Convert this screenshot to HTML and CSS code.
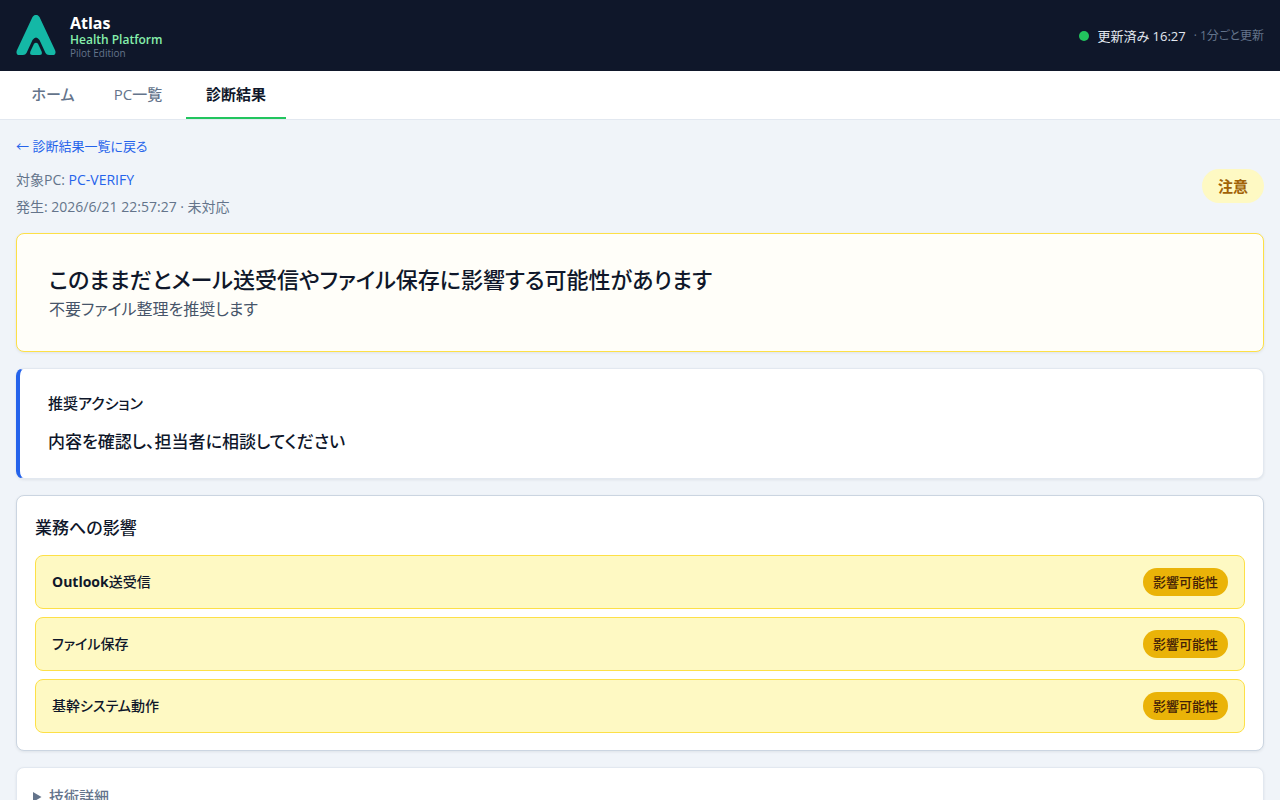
FILE: index.html
```html
<!DOCTYPE html>
<html lang="ja">
<head>
<meta charset="utf-8">
<meta name="viewport" content="width=device-width, initial-scale=1">
<title>診断結果 - Atlas Health Platform</title>
<link rel="stylesheet" href="styles.css">
</head>
<body>
<header class="topbar">
  <div class="brand">
    <svg class="brand-logo" viewBox="0 1 40 42" aria-hidden="true">
      <path fill="#14b8a6" d="M16.500 3Q20 -1.500 23.500 3L39.200 36.500Q40.500 41 36.500 41H33Q30.500 41 29.500 39L23.500 26Q20 21 16.500 26L10.500 39Q9.500 41 7 41H3.500Q-0.500 41 0.800 36.500Z"/>
      <path fill="#14b8a6" d="M18 29.800Q20 27.500 22 29.800L25.600 37.500Q26.800 41 23.500 41H16.500Q13.200 41 14.400 37.500Z"/>
    </svg>
    <div class="brand-text">
      <span class="brand-name">Atlas</span>
      <span class="brand-sub">Health Platform</span>
      <span class="brand-edition">Pilot Edition</span>
    </div>
  </div>
  <div class="status">
    <span class="status-dot"></span>
    <span class="status-time">更新済み 16:27</span>
    <span class="status-note">· 1分ごと更新</span>
  </div>
</header>
<nav class="tabs">
  <a class="tab" href="#home">ホーム</a>
  <a class="tab" href="#pcs">PC一覧</a>
  <a class="tab tab-active" href="#results" aria-current="page">診断結果</a>
</nav>
<main class="page">
  <a class="back" href="#results">← 診断結果一覧に戻る</a>
  <div class="meta">
    <div class="meta-lines">
      <p class="meta-line">対象PC: <a class="link" href="#pc-verify">PC-VERIFY</a></p>
      <p class="meta-line">発生: 2026/6/21 22:57:27 · 未対応</p>
    </div>
    <span class="level">注意</span>
  </div>
  <section class="card summary">
    <h1 class="summary-title">このままだとメール送受信やファイル保存に影響する可能性があります</h1>
    <p class="summary-text">不要ファイル整理を推奨します</p>
  </section>
  <section class="card action">
    <h2 class="action-label">推奨アクション</h2>
    <p class="action-text">内容を確認し、担当者に相談してください</p>
  </section>
  <section class="card impact">
    <h2 class="impact-title">業務への影響</h2>
    <ul class="impact-list">
      <li class="impact-row"><span><b>Outlook</b>送受信</span><span class="badge">影響可能性</span></li>
      <li class="impact-row"><span>ファイル保存</span><span class="badge">影響可能性</span></li>
      <li class="impact-row"><span>基幹システム動作</span><span class="badge">影響可能性</span></li>
    </ul>
  </section>
  <details class="card details">
    <summary class="details-title">技術詳細</summary>
  </details>
</main>
</body>
</html>
```
FILE: styles.css
```css
* { box-sizing: border-box; }

body {
  margin: 0;
  background: #f0f4f9;
  color: #0f172a;
  font-family: "Open Sans", "Noto Sans CJK JP", sans-serif;
  font-feature-settings: "palt";
  font-size: 13px;
  line-height: 20px;
}

h1, h2, p, ul { margin: 0; padding: 0; }
a { text-decoration: none; }

.topbar {
  display: flex;
  align-items: center;
  justify-content: space-between;
  padding: 13px 16px 12px;
  background: #0f172a;
}
.brand { display: flex; align-items: center; gap: 14px; }
.brand-logo { width: 40px; height: 42px; }
.brand-text { display: flex; flex-direction: column; }
.brand-name { color: #fff; font-size: 16px; font-weight: 700; line-height: 20px; }
.brand-sub { color: #86efac; font-size: 12px; font-weight: 600; line-height: 14px; }
.brand-edition { color: #64748b; font-size: 10px; line-height: 12px; }

.status { display: flex; align-items: center; gap: 8px; }
.status-dot { width: 10px; height: 10px; border-radius: 50%; background: #22c55e; }
.status-time { color: #e2e8f0; }
.status-note { color: #64748b; font-size: 12px; }

.tabs {
  display: grid;
  grid-template-columns: 74px 88px 100px;
  gap: 4px;
  padding: 0 16px;
  background: #fff;
  border-bottom: 1px solid #e2e8f0;
}
.tab {
  padding: 13px 0;
  border-bottom: 2px solid transparent;
  color: #64748b;
  font-size: 15px;
  font-weight: 500;
  text-align: center;
}
.tab-active { border-bottom-color: #22c55e; color: #0f172a; font-weight: 700; }

.page { display: flex; flex-direction: column; gap: 16px; padding: 16px; }
.back { align-self: flex-start; color: #2563eb; }
.link { color: #2563eb; }

.meta { display: flex; justify-content: space-between; align-items: flex-start; margin-top: -4px; }
.meta-lines { display: flex; flex-direction: column; gap: 7px; padding-top: 2px; }
.meta-line { color: #64748b; font-size: 14px; line-height: 20px; }
.level {
  margin-top: 1px;
  padding: 7px 16px;
  border-radius: 999px;
  background: #fef9c3;
  color: #a16207;
  font-size: 15px;
  font-weight: 700;
}

.card {
  background: #fff;
  border: 1px solid #e2e8f0;
  border-radius: 8px;
  box-shadow: 0 1px 3px rgba(15, 23, 42, 0.08);
}
.summary { padding: 28px 32px; background: #fffef9; border-color: #fde047; }
.summary-title { font-size: 22px; font-weight: 500; line-height: 34px; }
.summary-text { color: #475569; font-size: 16px; line-height: 27px; }

.action { padding: 23px 28px 22px; border-left: 4px solid #2563eb; }
.action-label { font-size: 15px; font-weight: 500; line-height: 22px; }
.action-text { margin-top: 14px; font-size: 17px; font-weight: 500; line-height: 28px; }

.impact { padding: 19px 18px 17px; border-color: #cbd5e1; }
.impact-title { font-size: 17px; font-weight: 500; line-height: 26px; }
.impact-list { display: flex; flex-direction: column; gap: 8px; margin-top: 14px; list-style: none; }
.impact-row {
  display: flex;
  justify-content: space-between;
  align-items: center;
  padding: 12px 16px;
  background: #fef9c3;
  border: 1px solid #fde047;
  border-radius: 8px;
  font-size: 14px;
  font-weight: 500;
}
.badge {
  padding: 4px 10px;
  border-radius: 999px;
  background: #eab308;
  color: #422006;
  font-size: 13px;
}

.details { padding: 16px; }
.details-title { color: #64748b; font-size: 15px; font-weight: 500; line-height: 24px; }
```
